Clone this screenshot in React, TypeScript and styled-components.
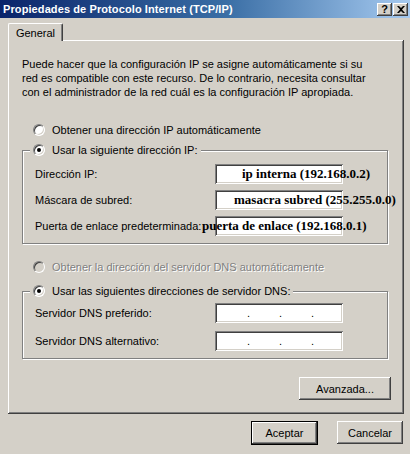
import React from 'react'
import styled, { createGlobalStyle, css } from 'styled-components'

const GlobalStyle = createGlobalStyle`
  html, body {
    margin: 0;
    padding: 0;
    background: #d4d0c8;
  }
  body {
    font-family: "Liberation Sans", Arial, sans-serif;
    font-size: 11px;
    color: #000;
  }
`

/* classic 3d edges */
const raised = css`
  box-shadow: inset -1px -1px #404040, inset 1px 1px #fff,
    inset -2px -2px #808080, inset 2px 2px #d4d0c8;
`

const sunken = css`
  box-shadow: inset 1px 1px #808080, inset -1px -1px #fff,
    inset 2px 2px #404040, inset -2px -2px #d4d0c8;
`

type IpField = { label: string; text: string; shift: number }

const ipFields: IpField[] = [
  { label: 'Dirección IP:', text: 'ip interna (192.168.0.2)', shift: 27 },
  { label: 'Máscara de subred:', text: 'masacra subred  (255.255.0.0)', shift: 19 },
  { label: 'Puerta de enlace predeterminada:', text: 'puerta de enlace (192.168.0.1)', shift: -13 },
]

const dnsFields = ['Servidor DNS preferido:', 'Servidor DNS alternativo:']

export default function App() {
  return (
    <>
      <GlobalStyle />
      <Window>
        <TitleBar>
          <Title>Propiedades de Protocolo Internet (TCP/IP)</Title>
          <CaptionButtons>
            <CaptionButton>?</CaptionButton>
            <CaptionButton>
              <svg width="8" height="7" viewBox="0 0 8 7">
                <path d="M0 0h2l2 2 2-2h2L5 3.5 8 7H6L4 5 2 7H0l3-3.5z" fill="#000" />
              </svg>
            </CaptionButton>
          </CaptionButtons>
        </TitleBar>

        <Body>
          <Tabs>
            <Tab>General</Tab>
          </Tabs>
          <Panel>
            <Intro>
              Puede hacer que la configuración IP se asigne automáticamente si su
              red es compatible con este recurso. De lo contrario, necesita consultar
              con el administrador de la red cuál es la configuración IP apropiada.
            </Intro>

            <RadioRow $top={24}>
              <Radio />
              Obtener una dirección IP automáticamente
            </RadioRow>

            <Group $top={6}>
              <Legend>
                <Radio $checked />
                Usar la siguiente dirección IP:
              </Legend>
              <Rows $gap={6} $pad={7}>
                {ipFields.map((f) => (
                  <FieldRow key={f.label}>
                    <Label>{f.label}</Label>
                    <Box>
                      <Written style={{ marginLeft: f.shift }}>{f.text}</Written>
                    </Box>
                  </FieldRow>
                ))}
              </Rows>
            </Group>

            <RadioRow $top={16} $disabled>
              <Radio $disabled />
              Obtener la dirección del servidor DNS automáticamente
            </RadioRow>

            <Group $top={10}>
              <Legend>
                <Radio $checked />
                Usar las siguientes direcciones de servidor DNS:
              </Legend>
              <Rows $gap={8} $pad={5}>
                {dnsFields.map((label) => (
                  <FieldRow key={label}>
                    <Label>{label}</Label>
                    <Box>
                      <Dots>
                        <Dot>.</Dot>
                        <Dot>.</Dot>
                        <Dot>.</Dot>
                      </Dots>
                    </Box>
                  </FieldRow>
                ))}
              </Rows>
            </Group>

            <AdvancedRow>
              <Button $width={92}>Avanzada...</Button>
            </AdvancedRow>
          </Panel>

          <Footer>
            <Button $width={67} $primary>
              Aceptar
            </Button>
            <Button $width={66}>Cancelar</Button>
          </Footer>
        </Body>
      </Window>
    </>
  )
}

const Window = styled.div`
  width: 410px;
  height: 454px;
  display: flex;
  flex-direction: column;
  background: #d4d0c8;
  overflow: hidden;
`

const TitleBar = styled.div`
  height: 18px;
  flex: none;
  display: flex;
  align-items: center;
  justify-content: space-between;
  padding: 0 2px 0 3px;
  background: linear-gradient(to right, #0a246a, #3a6ea5 55%, #a6caf0);
`

const Title = styled.span`
  color: #fff;
  font-weight: 700;
  font-size: 11px;
  letter-spacing: 0.1px;
  white-space: nowrap;
`

const CaptionButtons = styled.div`
  display: flex;
  gap: 1px;
`

const CaptionButton = styled.div`
  width: 15px;
  height: 13px;
  display: flex;
  align-items: center;
  justify-content: center;
  background: #d4d0c8;
  font-weight: 700;
  font-size: 11px;
  line-height: 13px;
  ${raised}
`

const Body = styled.div`
  flex: 1;
  display: flex;
  flex-direction: column;
  padding: 5px 7px 0 8px;
`

const Tabs = styled.div`
  display: flex;
  position: relative;
  z-index: 1;
  margin-bottom: -1px;
`

const Tab = styled.div`
  width: 55px;
  height: 18px;
  box-sizing: border-box;
  padding-top: 3px;
  text-align: center;
  background: #d4d0c8;
  border-top: 1px solid #fff;
  border-left: 1px solid #fff;
  border-right: 1px solid #404040;
  border-radius: 2px 2px 0 0;
  box-shadow: inset -1px 0 #808080;
`

const Panel = styled.div`
  width: 396px;
  height: 374px;
  box-sizing: border-box;
  display: flex;
  flex-direction: column;
  padding: 17px 13px 0 14px;
  ${raised}
`

const Intro = styled.p`
  margin: 0;
  width: 350px;
  line-height: 14px;
`

const RadioRow = styled.div<{ $top: number; $disabled?: boolean }>`
  display: flex;
  align-items: center;
  gap: 7px;
  height: 14px;
  margin-top: ${(p) => p.$top}px;
  padding-left: 11px;
  ${(p) =>
    p.$disabled &&
    css`
      color: #808080;
      text-shadow: 1px 1px #fff;
    `}
`

const Radio = styled.span<{ $checked?: boolean; $disabled?: boolean }>`
  position: relative;
  flex: none;
  width: 12px;
  height: 12px;
  box-sizing: border-box;
  border-radius: 50%;
  border: 1px solid;
  border-color: #808080 #fff #fff #808080;
  background: ${(p) => (p.$disabled ? '#d4d0c8' : '#fff')};
  box-shadow: inset 1px 1px #404040, inset -1px -1px #d4d0c8;
  &::after {
    content: '';
    display: ${(p) => (p.$checked ? 'block' : 'none')};
    position: absolute;
    left: 3px;
    top: 3px;
    width: 4px;
    height: 4px;
    border-radius: 50%;
    background: #000;
  }
`

const Group = styled.fieldset<{ $top: number }>`
  margin: ${(p) => p.$top}px 0 0 0;
  width: 366px;
  box-sizing: border-box;
  padding: 0 10px 7px 12px;
  border: 1px solid #808080;
  box-shadow: inset 1px 1px #fff, 1px 1px #fff;
  min-width: 0;
`

const Legend = styled.legend`
  display: flex;
  align-items: center;
  gap: 7px;
  height: 14px;
  margin-left: -5px;
  padding: 0 3px;
  background: #d4d0c8;
`

const Rows = styled.div<{ $gap: number; $pad: number }>`
  display: flex;
  flex-direction: column;
  gap: ${(p) => p.$gap}px;
  padding-top: ${(p) => p.$pad}px;
`

const FieldRow = styled.div`
  display: flex;
  align-items: center;
  height: 20px;
`

const Label = styled.span`
  width: 180px;
  flex: none;
  white-space: nowrap;
`

const Box = styled.div`
  width: 128px;
  height: 20px;
  flex: none;
  box-sizing: border-box;
  display: flex;
  align-items: center;
  background: #fff;
  white-space: nowrap;
  ${sunken}
`

const Written = styled.span`
  position: relative;
  font-family: "Liberation Serif", "Times New Roman", serif;
  font-weight: 700;
  font-size: 13px;
  color: #000;
`

const Dots = styled.div`
  display: flex;
  padding-left: 3px;
  height: 16px;
  line-height: 16px;
`

const Dot = styled.span`
  width: 32px;
  text-align: right;
`

const AdvancedRow = styled.div`
  display: flex;
  justify-content: flex-end;
  margin-top: 18px;
`

const Button = styled.div<{ $width: number; $primary?: boolean }>`
  width: ${(p) => p.$width}px;
  height: 23px;
  box-sizing: border-box;
  display: flex;
  align-items: center;
  justify-content: center;
  background: #d4d0c8;
  ${raised}
  ${(p) =>
    p.$primary &&
    css`
      height: 24px;
      border: 1px solid #000;
    `}
`

const Footer = styled.div`
  display: flex;
  justify-content: flex-end;
  align-items: flex-start;
  gap: 19px;
  margin-top: 7px;
`
